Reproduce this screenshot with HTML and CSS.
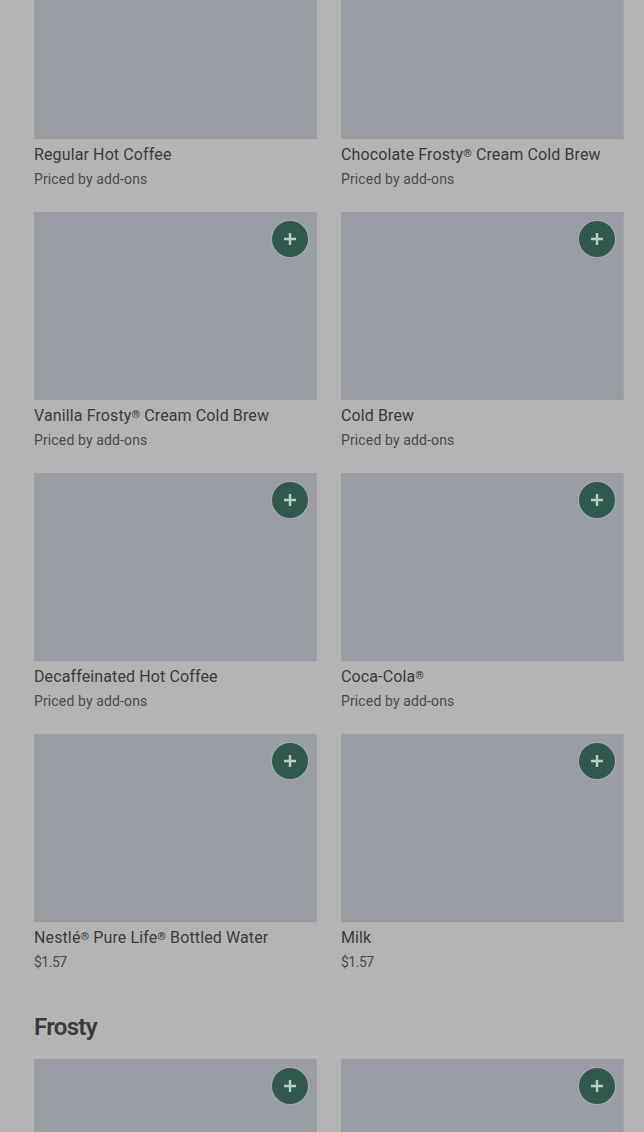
FILE: index.html
```html
<!DOCTYPE html>
<html lang="en">
<head>
  <meta charset="UTF-8" />
  <meta name="viewport" content="width=device-width, initial-scale=1.0" />
  <title>Menu</title>
  <link rel="stylesheet" href="styles.css">
</head>
<body>
  <main class="menu">
    <section class="menu-grid">
      <div class="item">
        <div class="item-photo"><button class="add-btn" aria-label="Add"><svg viewBox="0 0 16 16"><path d="M8 2v12M2 8h12" /></svg></button></div>
        <div class="item-name">Regular Hot Coffee</div>
        <div class="item-price">Priced by add-ons</div>
      </div>
      <div class="item">
        <div class="item-photo"><button class="add-btn" aria-label="Add"><svg viewBox="0 0 16 16"><path d="M8 2v12M2 8h12" /></svg></button></div>
        <div class="item-name">Chocolate Frosty<span class="reg">®</span> Cream Cold Brew</div>
        <div class="item-price">Priced by add-ons</div>
      </div>
      <div class="item">
        <div class="item-photo"><button class="add-btn" aria-label="Add"><svg viewBox="0 0 16 16"><path d="M8 2v12M2 8h12" /></svg></button></div>
        <div class="item-name">Vanilla Frosty<span class="reg">®</span> Cream Cold Brew</div>
        <div class="item-price">Priced by add-ons</div>
      </div>
      <div class="item">
        <div class="item-photo"><button class="add-btn" aria-label="Add"><svg viewBox="0 0 16 16"><path d="M8 2v12M2 8h12" /></svg></button></div>
        <div class="item-name">Cold Brew</div>
        <div class="item-price">Priced by add-ons</div>
      </div>
      <div class="item">
        <div class="item-photo"><button class="add-btn" aria-label="Add"><svg viewBox="0 0 16 16"><path d="M8 2v12M2 8h12" /></svg></button></div>
        <div class="item-name">Decaffeinated Hot Coffee</div>
        <div class="item-price">Priced by add-ons</div>
      </div>
      <div class="item">
        <div class="item-photo"><button class="add-btn" aria-label="Add"><svg viewBox="0 0 16 16"><path d="M8 2v12M2 8h12" /></svg></button></div>
        <div class="item-name">Coca-Cola<span class="reg">®</span></div>
        <div class="item-price">Priced by add-ons</div>
      </div>
      <div class="item">
        <div class="item-photo"><button class="add-btn" aria-label="Add"><svg viewBox="0 0 16 16"><path d="M8 2v12M2 8h12" /></svg></button></div>
        <div class="item-name">Nestlé<span class="reg">®</span> Pure Life<span class="reg">®</span> Bottled Water</div>
        <div class="item-price amount">$1.57</div>
      </div>
      <div class="item">
        <div class="item-photo"><button class="add-btn" aria-label="Add"><svg viewBox="0 0 16 16"><path d="M8 2v12M2 8h12" /></svg></button></div>
        <div class="item-name">Milk</div>
        <div class="item-price amount">$1.57</div>
      </div>
    </section>

    <h2 class="section-title">Frosty</h2>
    <section class="menu-grid">
      <div class="item">
        <div class="item-photo"><button class="add-btn" aria-label="Add"><svg viewBox="0 0 16 16"><path d="M8 2v12M2 8h12" /></svg></button></div>
      </div>
      <div class="item">
        <div class="item-photo"><button class="add-btn" aria-label="Add"><svg viewBox="0 0 16 16"><path d="M8 2v12M2 8h12" /></svg></button></div>
      </div>
    </section>
  </main>
</body>
</html>
```

FILE: styles.css
```css
* { margin: 0; padding: 0; box-sizing: border-box; }

html, body {
  height: 100%;
  overflow: hidden;
}

body {
  font-family: 'Roboto', 'Liberation Sans', sans-serif;
  background-color: #b4b4b4;
  color: #3a3a3a;
}

/* page is scrolled, first row is cut off by the top edge */
.menu {
  margin-top: -49px;
  padding: 0 20px 0 34px;
}

.menu-grid {
  display: grid;
  grid-template-columns: repeat(2, 1fr);
  column-gap: 24px;
}

.item {
  padding-bottom: 23px;
}

.item-photo {
  position: relative;
  height: 188px;
  background-color: #9b9da5;
  border-right: 1px solid #a3a3a5;
  border-bottom: 1px solid #999999;
}

.add-btn {
  position: absolute;
  top: 9px;
  right: 8px;
  width: 36px;
  height: 36px;
  display: flex;
  align-items: center;
  justify-content: center;
  border: none;
  border-radius: 50%;
  background-color: #30594e;
  box-shadow: 0 0 0 1px #a9afb0;
  cursor: pointer;
}

.add-btn svg {
  width: 16px;
  height: 16px;
}

.add-btn path {
  fill: none;
  stroke: #bccbc6;
  stroke-width: 2.4;
}

.item-name {
  margin-top: 6px;
  font-size: 16px;
  font-weight: 450;
  line-height: 20px;
  letter-spacing: 0.12px;
}

.reg {
  font-size: 11px;
  font-weight: 700;
  vertical-align: 3px;
  line-height: 0;
  letter-spacing: 0;
}

.item-price {
  margin-top: 4px;
  font-size: 14px;
  line-height: 20px;
  letter-spacing: 0.13px;
  color: #4a4a4a;
}

.item-price.amount {
  letter-spacing: -0.5px;
}

.section-title {
  padding: 16px 0 13px 2px;
  border-bottom: 1px solid #b9b9b9;
  margin: 0 -2px 2px;
  font-size: 24px;
  font-weight: 600;
  line-height: 32px;
  letter-spacing: -0.7px;
}
```
